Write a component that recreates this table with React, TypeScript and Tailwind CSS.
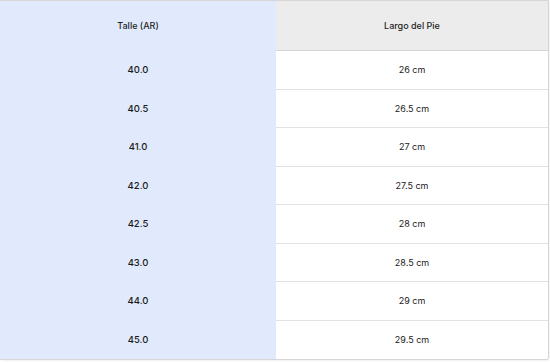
import React from 'react';

const rows: [string, string][] = [
  ['40.0', '26 cm'],
  ['40.5', '26.5 cm'],
  ['41.0', '27 cm'],
  ['42.0', '27.5 cm'],
  ['42.5', '28 cm'],
  ['43.0', '28.5 cm'],
  ['44.0', '29 cm'],
  ['45.0', '29.5 cm'],
];

export default function App() {
  return (
    <div className="w-[550px] h-[364px] bg-white" style={{ fontFamily: 'Inter, "Noto Sans", sans-serif' }}>
      <div className="w-[549px] border border-[#d6d6d6] border-l-0 rounded-br-[3px] overflow-hidden shadow-[1px_1px_2px_rgba(0,0,0,0.06)]">
        <div className="flex h-[50px]">
          <div className="w-[276px] bg-[#e1eafc] flex items-center justify-center text-[9px] font-medium text-[#1f1f1f]">
            Talle (AR)
          </div>
          <div className="flex-1 bg-[#ececec] border-b border-[#d4d4d4] flex items-center justify-center text-[9px] font-medium text-[#1f1f1f]">
            Largo del Pie
          </div>
        </div>
        {rows.map(([talle, largo], i) => (
          <div key={talle} className="flex h-[38.5px]">
            <div className="w-[276px] bg-[#e1eafc] flex items-center justify-center text-[9.5px] font-medium text-[#1a1a1a]">
              {talle}
            </div>
            <div
              className={
                'flex-1 bg-white flex items-center justify-center text-[9px] text-[#222] ' +
                (i < rows.length - 1 ? 'border-b border-[#e2e2e2]' : '')
              }
            >
              {largo}
            </div>
          </div>
        ))}
      </div>
    </div>
  );
}
